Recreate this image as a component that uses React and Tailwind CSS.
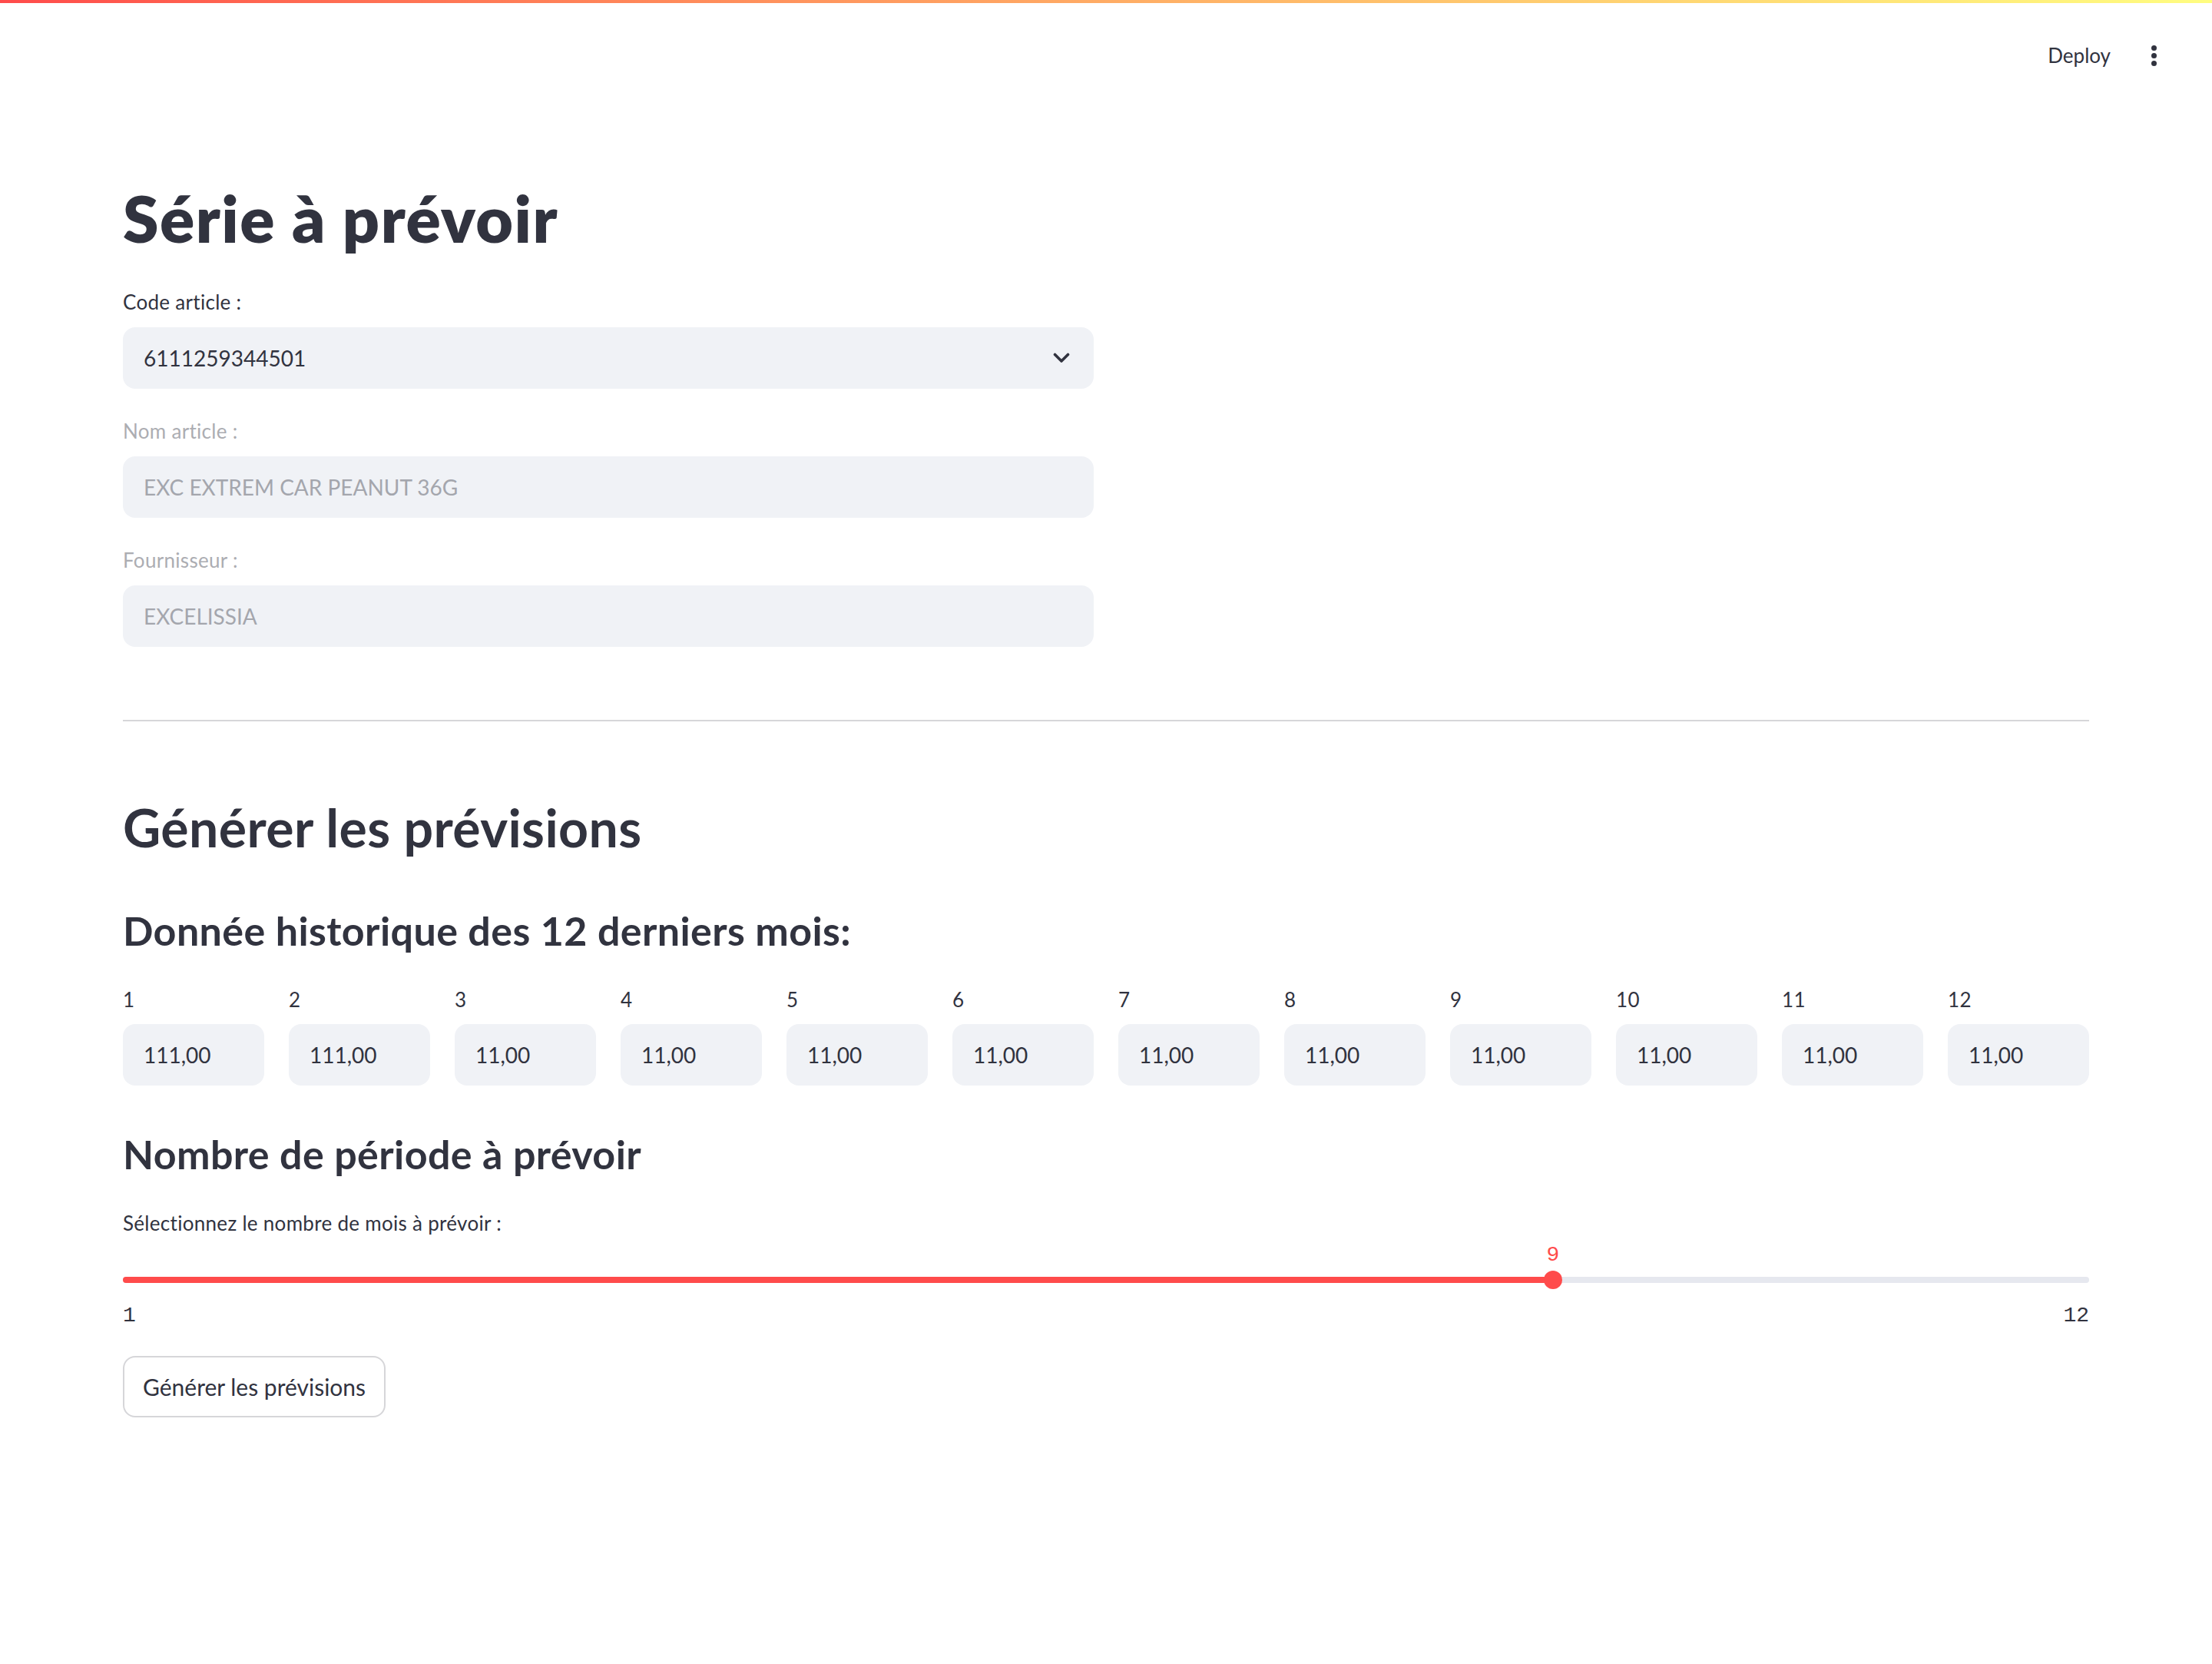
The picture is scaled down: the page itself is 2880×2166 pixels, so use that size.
import React from "react";

const values = ["111,00", "111,00", "11,00", "11,00", "11,00", "11,00", "11,00", "11,00", "11,00", "11,00", "11,00", "11,00"];

function Label({ children, muted }) {
  return (
    <div className={"h-[40px] leading-[40px] text-[26px] tracking-[0.3px] " + (muted ? "text-[#acadb2]" : "text-[#31333f]")}>
      {children}
    </div>
  );
}

export default function App() {
  const pct = ((9 - 1) / (12 - 1)) * 100;
  return (
    <div className="min-h-[2166px] w-[2880px] bg-white text-[#31333f]" style={{ fontFamily: "Lato, 'Noto Sans', sans-serif" }}>
      <div className="h-[4px] w-full bg-gradient-to-r from-[#ff4b4b] to-[#fffd80]" />
      <div className="flex h-[40px] items-center justify-end pr-[72px] mt-[48px]">
        <span className="text-[26px] leading-[40px] text-[#31333f]">Deploy</span>
        <div className="ml-[53px] flex flex-col items-center gap-[3px]">
          <span className="block h-[7px] w-[7px] rounded-full bg-[#31333f]" />
          <span className="block h-[7px] w-[7px] rounded-full bg-[#31333f]" />
          <span className="block h-[7px] w-[7px] rounded-full bg-[#31333f]" />
        </div>
      </div>

      <main className="px-[160px]">
        <h1 className="mt-[142px] h-[100px] text-[84px] font-extrabold tracking-[1.5px] leading-[100px] text-[#31333f]">Série à prévoir</h1>

        <div className="w-[1264px]">
          <div className="mt-[39px]"><Label>Code article :</Label></div>
          <div className="mt-[13px] flex h-[80px] items-center justify-between rounded-[16px] bg-[#f0f2f6] pl-[27px] pr-[31px]">
            <span className="text-[28px] text-[#31333f]">6111259344501</span>
            <svg width="22" height="14" viewBox="0 0 22 14" fill="none">
              <path d="M2.5 2.5 L11 11 L19.5 2.5" stroke="#31333f" strokeWidth="3.6" strokeLinecap="round" strokeLinejoin="round" />
            </svg>
          </div>

          <div className="mt-[35px]"><Label muted>Nom article :</Label></div>
          <div className="mt-[13px] flex h-[80px] items-center rounded-[16px] bg-[#f0f2f6] pl-[27px]">
            <span className="text-[28px] text-[#a4a6ad]">EXC EXTREM CAR PEANUT 36G</span>
          </div>

          <div className="mt-[35px]"><Label muted>Fournisseur :</Label></div>
          <div className="mt-[13px] flex h-[80px] items-center rounded-[16px] bg-[#f0f2f6] pl-[27px]">
            <span className="text-[28px] text-[#a4a6ad]">EXCELISSIA</span>
          </div>
        </div>

        <hr className="mt-[95px] h-[2px] border-0 bg-[#d6d6d9]" />

        <h2 className="mt-[97px] h-[82px] text-[68px] font-bold tracking-[0.4px] leading-[82px] text-[#31333f]">Générer les prévisions</h2>
        <h3 className="mt-[61px] h-[64px] text-[52px] font-bold tracking-[0.4px] leading-[64px] text-[#31333f]">Donnée historique des 12 derniers mois:</h3>

        <div className="mt-[38px] grid grid-cols-12 gap-x-[32px]">
          {values.map((v, i) => (
            <div key={i} className="flex flex-col">
              <Label>{i + 1}</Label>
              <div className="mt-[12px] flex h-[80px] items-center rounded-[16px] bg-[#f0f2f6] pl-[27px]">
                <span className="text-[28px] text-[#31333f]">{v}</span>
              </div>
            </div>
          ))}
        </div>

        <h3 className="mt-[57px] h-[64px] text-[52px] font-bold tracking-[0.4px] leading-[64px] text-[#31333f]">Nombre de période à prévoir</h3>
        <div className="mt-[38px]"><Label>Sélectionnez le nombre de mois à prévoir :</Label></div>

        <div className="relative mt-[6px] h-[32px]">
          <span
            className="absolute top-0 -translate-x-1/2 text-[28px] leading-[32px] text-[#ff4b4b]"
            style={{ left: pct + "%", fontFamily: "'Liberation Mono', monospace" }}
          >
            9
          </span>
        </div>
        <div className="relative mt-[4px] flex h-[24px] items-center">
          <div className="flex h-[8px] w-full overflow-hidden rounded-full bg-[#e6e8ef]">
            <div className="h-full bg-[#ff4b4b]" style={{ width: pct + "%" }} />
          </div>
          <span
            className="absolute top-0 h-[24px] w-[24px] -translate-x-1/2 rounded-full bg-[#ff4b4b]"
            style={{ left: pct + "%" }}
          />
        </div>
        <div className="mt-[19px] flex h-[32px] justify-between text-[28px] leading-[32px] text-[#31333f]" style={{ fontFamily: "'Liberation Mono', monospace" }}>
          <span>1</span>
          <span>12</span>
        </div>

        <button className="mt-[36px] flex h-[80px] items-center rounded-[16px] border-2 border-[#d6d6d9] bg-white px-[24px] text-[30px] text-[#31333f]">
          Générer les prévisions
        </button>
      </main>
    </div>
  );
}
